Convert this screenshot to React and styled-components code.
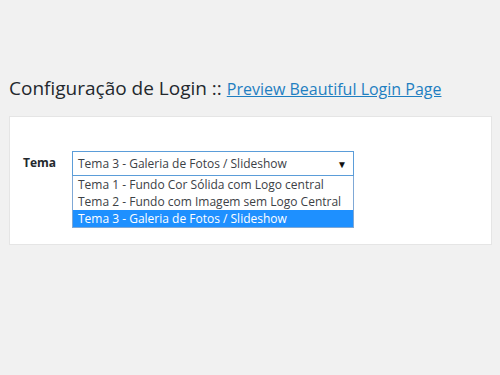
import React from "react";
import styled, { createGlobalStyle } from "styled-components";

const GlobalStyle = createGlobalStyle`
  html, body {
    margin: 0;
    padding: 0;
    background: #f1f1f1;
  }
  body {
    font-family: "Open Sans", "Noto Sans", sans-serif;
    color: #23282d;
  }
`;

const Page = styled.div`
  width: 500px;
  height: 375px;
  padding: 74px 0 0 9px;
  box-sizing: border-box;
`;

const Heading = styled.h1`
  margin: 0 0 12px 0;
  font-size: 19px;
  font-weight: 400;
  line-height: 29px;
  color: #23282d;
  white-space: nowrap;
`;

const PreviewLink = styled.a`
  color: #1f7fc1;
  text-decoration: underline;
  font-size: 16px;
  cursor: pointer;
`;

const Panel = styled.div`
  width: 483px;
  box-sizing: border-box;
  background: #fff;
  border: 1px solid #e5e5e5;
  padding: 34px 0 16px 13px;
`;

const Row = styled.div`
  display: flex;
  align-items: flex-start;
`;

const Label = styled.label`
  width: 49px;
  font-size: 12px;
  font-weight: 700;
  line-height: 22px;
  padding-top: 1px;
  color: #23282d;
`;

const Combo = styled.div`
  width: 282px;
  display: flex;
  flex-direction: column;
`;

const SelectBox = styled.div`
  height: 25px;
  box-sizing: border-box;
  border: 1px solid #5b9dd9;
  display: flex;
  align-items: center;
  justify-content: space-between;
  padding: 0 6px 0 5px;
  font-size: 12px;
  color: #3c4146;
`;

const Caret = styled.span`
  font-size: 10px;
  color: #111;
`;

const List = styled.ul`
  list-style: none;
  margin: 0;
  padding: 0;
  border: 1px solid #7fa8d6;
  border-top: 0;
`;

const Option = styled.li`
  height: 17px;
  line-height: 17px;
  padding: 0 5px;
  font-size: 12px;
  white-space: nowrap;
  color: ${({ selected }) => (selected ? "#fff" : "#3c4146")};
  background: ${({ selected }) => (selected ? "#1e90ff" : "#fff")};
`;

const options = [
  "Tema 1 - Fundo Cor Sólida com Logo central",
  "Tema 2 - Fundo com Imagem sem Logo Central",
  "Tema 3 - Galeria de Fotos / Slideshow",
];

export default function App() {
  const current = 2;
  return (
    <Page>
      <GlobalStyle />
      <Heading>
        Configuração de Login :: <PreviewLink>Preview Beautiful Login Page</PreviewLink>
      </Heading>
      <Panel>
        <Row>
          <Label>Tema</Label>
          <Combo>
            <SelectBox>
              <span>{options[current]}</span>
              <Caret>▼</Caret>
            </SelectBox>
            <List>
              {options.map((o, i) => (
                <Option key={o} selected={i === current}>
                  {o}
                </Option>
              ))}
            </List>
          </Combo>
        </Row>
      </Panel>
    </Page>
  );
}
